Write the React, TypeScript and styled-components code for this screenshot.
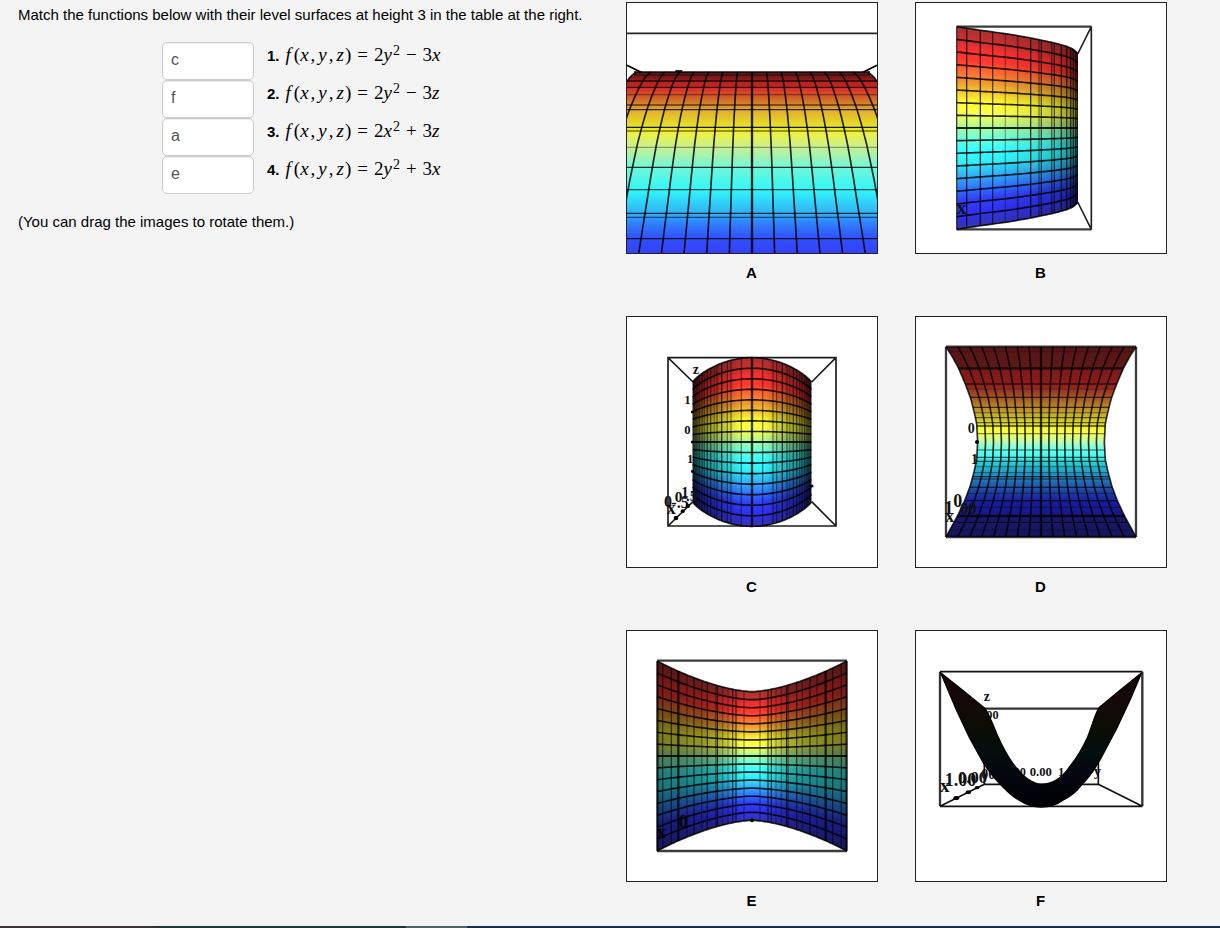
import React from "react";
import styled, { createGlobalStyle } from "styled-components";

const GlobalStyle = createGlobalStyle`
  *, *::before, *::after { box-sizing: border-box; }
  body {
    margin: 0;
    background: #f4f4f4;
    color: #000;
    font: 15px/20px "Liberation Sans", Arial, sans-serif;
  }
`;

/* ---------- layout ---------- */

const Page = styled.div`
  min-height: 100vh;
  display: flex;
  flex-direction: column;
`;

const Problem = styled.main`
  flex: 1;
  display: grid;
  grid-template-columns: minmax(0, 1fr) auto;
  column-gap: 32px;
  padding: 2px 53px 8px 18px;
`;

const Statement = styled.section`
  display: flex;
  flex-direction: column;
`;

const Paragraph = styled.p`
  margin: 3px 0 17px;
`;

const QuestionList = styled.ol`
  list-style: none;
  margin: 0 0 15px;
  padding: 0 0 0 144px;
`;

const Question = styled.li`
  display: flex;
  align-items: flex-start;
  gap: 13px;
  height: 38px;
`;

const Answer = styled.input`
  width: 92px;
  height: 38px;
  padding: 4px 8px 6px;
  border: 1px solid #ccc;
  border-radius: 5px;
  background: #fff;
  box-shadow: inset 0 1px 1px rgba(0, 0, 0, 0.08);
  color: #555;
  font: inherit;
  font-size: 16px;
`;

const QuestionLabel = styled.label`
  display: flex;
  align-items: baseline;
  gap: 6px;
  padding-top: 2px;
`;

const Formula = styled.span`
  font: 19px/22px "Liberation Serif", "Times New Roman", serif;
  white-space: nowrap;

  sup {
    font-size: 14px;
    line-height: 0;
    vertical-align: 6px;
    margin-left: 1px;
  }
`;

const Variable = styled.i<{ $after?: number }>`
  margin-right: ${(p) => p.$after ?? 0}px;
`;

const Comma = styled.span`
  margin-right: 3px;
`;

const Operator = styled.span<{ $space: number }>`
  margin: 0 ${(p) => p.$space}px;
`;

const Gallery = styled.section`
  display: grid;
  grid-template-columns: repeat(2, 252px);
  grid-auto-rows: max-content;
  gap: 33px 37px;
`;

const Plot = styled.figure`
  margin: 0;
`;

const Canvas = styled.svg`
  display: block;
  width: 252px;
  height: 252px;
  border: 1px solid #222;
  background: #fff;
  cursor: move;
`;

const Caption = styled.figcaption`
  padding-top: 9px;
  padding-right: 1px;
  text-align: center;
  font-weight: bold;
`;

const BottomEdge = styled.footer`
  display: flex;
  height: 2px;
  background: #1b2d45;
`;

const EdgePart = styled.span<{ $width: number; $color: string }>`
  width: ${(p) => p.$width}px;
  background: ${(p) => p.$color};
`;

/* ---------- plots ---------- */

type Pt = [number, number];
type Stop = [number, string];

const INK = "#000";
const SERIF = '"Liberation Serif", "Times New Roman", serif';

const rainbow: Stop[] = [
  [0, "#ac3030"], [0.06, "#c83030"], [0.1, "#f53030"], [0.16, "#ff3830"],
  [0.2, "#ff6030"], [0.27, "#ee9a30"], [0.32, "#f4cc2c"], [0.375, "#ffff30"],
  [0.43, "#faff50"], [0.49, "#b4f890"], [0.54, "#78ffd0"], [0.61, "#38ffff"],
  [0.67, "#30f0f8"], [0.74, "#30b0f8"], [0.8, "#3078ff"], [0.86, "#3040f8"],
  [0.93, "#3030f0"], [1, "#3434b0"],
];

const toPoints = (pts: Pt[]) => pts.map((p) => p.join(",")).join(" ");

const interpolate = (table: Pt[]) => (v: number) => {
  if (v <= table[0][0]) return table[0][1];
  for (let i = 1; i < table.length; i++) {
    const [x1, y1] = table[i];
    const [x0, y0] = table[i - 1];
    if (v <= x1) return y0 + ((y1 - y0) * (v - x0)) / (x1 - x0);
  }
  return table[table.length - 1][1];
};

const range = (from: number, to: number, step: number) => {
  const out: number[] = [];
  for (let v = from; v < to; v += step) out.push(v);
  out.push(to);
  return out;
};

function Gradient({ id, stops, span }: { id: string; stops: Stop[]; span?: Pt }) {
  const box = span
    ? { gradientUnits: "userSpaceOnUse" as const, x1: 0, x2: 0, y1: span[0], y2: span[1] }
    : { x1: 0, x2: 0, y1: 0, y2: 1 };
  return (
    <linearGradient id={id} {...box}>
      {stops.map(([at, color], i) => (
        <stop
          key={i}
          offset={span ? (at - span[0]) / (span[1] - span[0]) : at}
          stopColor={color}
        />
      ))}
    </linearGradient>
  );
}

/* A surface seen from the side: height varies with x, rulings are vertical. */
function SideSurface(props: {
  id: string;
  left: number;
  right: number;
  mid: number;
  half: (x: number) => number;
  shade: (x: number) => number;
  verticals: Pt[];
}) {
  const { id, left, right, mid, half, shade, verticals } = props;
  const strips = range(Math.ceil(left / 3) * 3, right - 3, 3);
  const xs = range(left, right, 6);
  return (
    <g>
      <defs>
        <Gradient id={id} stops={rainbow} />
      </defs>
      {strips.map((x) => {
        const h = half(x + 1.5);
        const area = { x, y: mid - h, width: 3, height: 2 * h, shapeRendering: "crispEdges" };
        return (
          <g key={x}>
            <rect {...area} fill={`url(#${id})`} />
            <rect {...area} fill="#000" fillOpacity={shade(x)} />
          </g>
        );
      })}
      {verticals.map(([x, weight]) => (
        <line
          key={x}
          x1={x}
          x2={x}
          y1={mid - half(x)}
          y2={mid + half(x)}
          stroke={INK}
          strokeWidth={weight > 1 ? 7 : 4}
          strokeOpacity={weight > 1 ? 0.75 : weight * 0.75}
        />
      ))}
      {range(-8, 8, 1).map((j) => (
        <polyline
          key={j}
          points={toPoints(xs.map((x) => [x, mid + (half(x) * j) / 8]))}
          fill="none"
          stroke={INK}
          strokeOpacity={0.85}
          strokeWidth={j === 0 ? 6 : 5}
        />
      ))}
    </g>
  );
}

function PlotA() {
  const spread = interpolate([
    [216, 43.3], [222, 44.4], [232, 45.8], [248, 47.2], [265, 48.5], [290, 50.2],
    [325, 52.3], [350, 53.6], [384, 55.2], [430, 57.2], [480, 59], [535, 60.9],
    [590, 62.6], [640, 64.2], [700, 66.1], [762, 68],
  ]);
  const ys = [216, 222, 232, 248, 265, 290, 325, 350, 384, 430, 480, 535, 590, 640, 700, 762];
  const edge = (k: number): Pt[] => ys.map((y) => [396 + k * spread(y), y]);
  const rows: Pt[] = [
    [216, 0.9], [225, 0.4], [243, 0.8], [262, 0.7], [284, 0.4], [315, 0.6], [329, 0.8],
    [382, 0.9], [393, 0.5], [442, 0.35], [502, 0.8], [569, 0.7], [640, 0.75],
    [652, 0.55], [716, 0.8],
  ];
  return (
    <g>
      <defs>
        <Gradient
          id="surface-a"
          span={[216, 762]}
          stops={[
            [216, "#561616"], [236, "#841a1a"], [244, "#b42222"], [262, "#c42626"],
            [268, "#d83428"], [290, "#d05c28"], [315, "#d88a2a"], [332, "#e2b02e"],
            [382, "#e6e428"], [400, "#f0f044"], [442, "#c8f090"], [500, "#74f6d8"],
            [569, "#30f8f8"], [640, "#30b0f8"], [670, "#3080ff"], [716, "#3050f8"],
            [762, "#3440fa"],
          ]}
        />
      </defs>
      <g stroke={INK} strokeWidth={5}>
        <line x1={21} y1={100} x2={771} y2={100} strokeOpacity={0.85} />
        <line x1={21} y1={196} x2={66} y2={218} />
        <line x1={771} y1={196} x2={726} y2={218} />
        <line x1={166} y1={213} x2={187} y2={213} />
      </g>
      <polygon
        fill="url(#surface-a)"
        points={toPoints([[50, 216], [36, 226], [21, 242], [21, 762], [771, 762], [771, 242], [756, 226], [742, 216]])}
      />
      {rows.map(([y, o]) => (
        <line key={y} x1={y < 240 ? 42 : 21} x2={y < 240 ? 750 : 771} y1={y} y2={y} stroke={INK} strokeWidth={4} strokeOpacity={o} />
      ))}
      {range(-8, 8, 1).map((k) => (
        <polyline
          key={k}
          points={toPoints(edge(k))}
          fill="none"
          stroke={INK}
          strokeOpacity={0.85}
          strokeWidth={k === 0 ? 7 : 5}
        />
      ))}
    </g>
  );
}

function PlotB() {
  const half = interpolate([
    [140, 304], [220, 292], [300, 281], [362, 270], [430, 256], [470, 245], [490, 236], [503, 224],
  ]);
  const shade = interpolate([[140, 0], [260, 0], [360, 0.08], [430, 0.2], [470, 0.35], [503, 0.6]]);
  return (
    <g>
      <g stroke="#3c3c3c" strokeWidth={7} fill="none">
        <path d="M140 80H545M140 688H545" />
      </g>
      <path d="M544 80V688M544 80L503 162M544 688L503 606" stroke="#222" strokeWidth={5} />
      <SideSurface
        id="surface-b"
        left={140}
        right={503}
        mid={384}
        half={half}
        shade={shade}
        verticals={[
          [140, 1], [170, 1], [211, 1], [248, 0.8], [286, 0.4], [323, 0.6], [362, 1], [387, 0.6],
          [394, 0.8], [425, 0.7], [433, 0.8], [454, 0.9], [470, 0.9], [482, 0.9], [490, 0.8], [497, 0.8], [502, 0.9],
        ]}
      />
      <text x={140} y={643} fontFamily={SERIF} fontWeight="bold" fontSize={58} fill="#111">x</text>
    </g>
  );
}

function PlotC() {
  const half = (x: number) => {
    const u = Math.min(1, Math.abs(x - 396) / 178);
    return 180 + 73 * Math.pow(1 - u * u, 0.85);
  };
  const dark = interpolate([[0, 0], [35, 0], [70, 0.15], [100, 0.26], [140, 0.42], [178, 0.68]]);
  const offsets: Pt[] = [
    [32, 0.6], [63, 0.6], [74, 0.6], [91, 0.9], [105, 0.6], [113, 0.4], [124, 0.7],
    [134, 0.7], [143, 0.5], [150, 0.6], [158, 0.6], [165, 0.6], [171, 0.6], [177, 0.9],
  ];
  const verticals: Pt[] = [
    [396, 2],
    ...offsets.flatMap(([d, w]): Pt[] => [[396 - d, w], [396 + d, w]]),
  ];
  return (
    <g>
      <path
        d="M144 143H648V648H144ZM144 143L219 216M648 143L575 216M144 648L219 575M648 648L575 575"
        fill="none"
        stroke="#1c1c1c"
        strokeWidth={5}
      />
      <SideSurface
        id="surface-c"
        left={218}
        right={574}
        mid={396}
        half={half}
        shade={(x) => dark(Math.abs(x - 396))}
        verticals={verticals}
      />
      <g fontFamily={SERIF} fontWeight="bold" fill="#111">
        <text x={218} y={192} fontSize={42}>z</text>
        <text x={193} y={283} fontSize={38}>1</text>
        <text x={193} y={371} fontSize={38}>0</text>
        <text x={201} y={460} fontSize={38}>1</text>
        <text x={140} y={612} fontSize={54}>x</text>
        <text x={132} y={590} fontSize={48}>0</text>
        <text x={154} y={594} fontSize={48}>-.5</text>
        <text x={164} y={575} fontSize={46}>0</text>
        <text x={184} y={562} fontSize={44}>1</text>
        <text x={198} y={574} fontSize={44}>.5</text>
      </g>
      <circle cx={168} cy={624} r={7} />
      <circle cx={188} cy={604} r={6} />
      <circle cx={204} cy={588} r={6} />
      <path d="M213 306h8M213 396h8M213 484h8M572 528h8" stroke={INK} strokeWidth={7} />
    </g>
  );
}

function PlotD() {
  const half = interpolate([
    [110, 285], [140, 266], [175, 247], [222, 227], [265, 211], [300, 202], [340, 193],
    [396, 190], [450, 193], [490, 202], [530, 213], [570, 228], [617, 250], [650, 268], [681, 285],
  ]);
  const ys = range(110, 681, 8);
  const line = (k: number): Pt[] => ys.map((y) => [393 + (half(y) * k) / 8, y]);
  const rows: Pt[] = [
    [110, 2], [125, 0.3], [175, 2], [222, 0.9], [237, 0.3], [262, 1], [292, 1], [308, 0.5],
    [323, 0.8], [338, 0.8], [348, 1], [371, 0.7], [420, 0.6], [442, 0.9], [454, 0.9],
    [470, 0.5], [488, 0.5], [500, 1], [507, 0.6], [532, 1], [550, 0.5], [572, 1], [592, 0.5],
    [618, 2], [637, 0.9], [660, 0.3], [681, 2],
  ];
  return (
    <g>
      <defs>
        <Gradient
          id="surface-d"
          span={[110, 681]}
          stops={[
            [110, "#561616"], [172, "#5e1818"], [180, "#7c1a1a"], [222, "#8c1c1a"],
            [240, "#983420"], [265, "#a45a22"], [292, "#b88828"], [323, "#c8bc28"],
            [344, "#dede2c"], [352, "#f4f436"], [371, "#faff50"], [396, "#b8ffb8"],
            [420, "#68ffe8"], [442, "#40f4f0"], [454, "#28d4d4"], [490, "#2298c4"],
            [520, "#2064b0"], [550, "#1c3ca0"], [575, "#181c9c"], [612, "#181888"],
            [622, "#18186a"], [681, "#16165a"],
          ]}
        />
      </defs>
      <path d="M108 110V681M678 110V681" stroke="#3c3c3c" strokeWidth={7} />
      <polygon fill="url(#surface-d)" points={toPoints([...line(-8), ...line(8).reverse()])} />
      {rows.map(([y, w]) => (
        <line
          key={y}
          x1={393 - half(y)}
          x2={393 + half(y)}
          y1={y}
          y2={y}
          stroke={INK}
          strokeWidth={w > 1 ? 7 : 4}
          strokeOpacity={w > 1 ? 0.75 : w * 0.7}
        />
      ))}
      {range(-8, 8, 1).map((k) => (
        <polyline key={k} points={toPoints(line(k))} fill="none" stroke={INK} strokeOpacity={0.8} strokeWidth={k === 0 ? 7 : 5} />
      ))}
      <g fontFamily={SERIF} fontWeight="bold" fill="#111">
        <text x={173} y={368} fontSize={42}>0</text>
        <text x={183} y={463} fontSize={42}>1</text>
        <text x={102} y={612} fontSize={56}>1</text>
        <text x={106} y={636} fontSize={54}>x</text>
        <text x={130} y={592} fontSize={54}>0</text>
        <text x={150} y={611} fontSize={50}>00</text>
      </g>
      <circle cx={201} cy={396} r={6} />
    </g>
  );
}

function PlotE() {
  const half = (x: number) => 193 + 92 * Math.pow(Math.min(1, Math.abs(x - 396) / 285), 1.6);
  const dark = interpolate([[0, 0], [30, 0], [60, 0.13], [100, 0.3], [160, 0.42], [285, 0.52]]);
  const offsets: Pt[] = [
    [24, 0.5], [48, 0.8], [58, 0.8], [72, 0.4], [88, 0.4], [104, 1], [109, 0.5], [134, 0.8],
    [151, 0.5], [174, 0.8], [195, 0.5], [221, 2], [242, 0.8], [268, 0.7], [284, 2],
  ];
  return (
    <g>
      <path d="M111 107H681M111 678H681" stroke="#3c3c3c" strokeWidth={7} />
      <SideSurface
        id="surface-e"
        left={111}
        right={681}
        mid={393}
        half={half}
        shade={(x) => dark(Math.abs(x - 396))}
        verticals={offsets.flatMap(([d, w]): Pt[] => [[396 - d, w], [396 + d, w]])}
      />
      <g fontFamily={SERIF} fontWeight="bold" fill="#050505">
        <text x={110} y={638} fontSize={56}>x</text>
        <text x={176} y={609} fontSize={56}>0</text>
      </g>
      <circle cx={396} cy={586} r={6} />
    </g>
  );
}

function PlotF() {
  return (
    <g>
      <defs>
        <Gradient
          id="surface-f"
          span={[145, 545]}
          stops={[
            [145, "#140404"], [230, "#140808"], [300, "#0c0c04"], [390, "#020e0e"],
            [450, "#04040e"], [545, "#000004"],
          ]}
        />
      </defs>
      <g fill="none" stroke="#333">
        <path d="M90 140V544M697 140V544M223 251H565" strokeWidth={7} />
        <path d="M90 140H697M90 544H697M223 250V478H565V250M90 544L223 478M565 478L697 544" strokeWidth={5} stroke="#111" />
      </g>
      <g fontFamily={SERIF} fontWeight="bold" fill="#111">
        <text x={221} y={227} fontSize={42}>z</text>
        <text x={229} y={281} fontSize={37}>00</text>
        <text x={242} y={337} fontSize={38}>1</text>
        <text x={90} y={501} fontSize={58}>x</text>
        <text x={104} y={482} fontSize={54}>1.00</text>
        <text x={144} y={473} fontSize={50}>0.00</text>
        <text x={214} y={461} fontSize={42}>00</text>
        <text x={311} y={453} fontSize={37}>00</text>
        <text x={359} y={453} fontSize={38}>0.00</text>
        <text x={444} y={453} fontSize={38}>1.00</text>
        <text x={552} y={453} fontSize={42}>y</text>
      </g>
      <path
        d="M92 143L138 252L178 337L222 417C245 452 258 466 278 485C298 505 315 520 330 527C350 540 365 545 393 546C421 545 440 540 456 527C485 512 500 500 514 480C535 460 550 440 570 405L620 310L660 225L695 143L630 196L567 248C552 275 548 300 532 338C517 370 500 400 478 426C455 460 430 476 396 478C365 477 340 455 316 425C294 398 276 362 260 326C248 296 238 270 225 250L158 196Z"
        fill="url(#surface-f)"
        stroke="#060202"
        strokeWidth={4}
      />
      <ellipse cx={139} cy={519} rx={9} ry={6} />
      <ellipse cx={175} cy={502} rx={8} ry={6} />
      <ellipse cx={201} cy={488} rx={7} ry={5} />
    </g>
  );
}

const plots = [
  { name: "A", viewBox: "21 9 750 750", Surface: PlotA },
  { name: "B", viewBox: "18 9 750 750", Surface: PlotB },
  { name: "C", viewBox: "21 21 750 750", Surface: PlotC },
  { name: "D", viewBox: "18 21 750 750", Surface: PlotD },
  { name: "E", viewBox: "21 18 750 750", Surface: PlotE },
  { name: "F", viewBox: "18 18 750 750", Surface: PlotF },
];

const questions = [
  { answer: "c", squared: "y", sign: "−", linear: "x" },
  { answer: "f", squared: "y", sign: "−", linear: "z" },
  { answer: "a", squared: "x", sign: "+", linear: "z" },
  { answer: "e", squared: "y", sign: "+", linear: "x" },
];

export default function App() {
  return (
    <Page>
      <GlobalStyle />
      <Problem>
        <Statement>
          <Paragraph>
            Match the functions below with their level surfaces at height 3 in the table at the right.
          </Paragraph>
          <QuestionList>
            {questions.map((q, i) => (
              <Question key={i}>
                <Answer id={`answer-${i + 1}`} type="text" defaultValue={q.answer} />
                <QuestionLabel htmlFor={`answer-${i + 1}`}>
                  <b>{i + 1}.</b>
                  <Formula>
                    <Variable $after={3}>f</Variable>(<Variable $after={2}>x</Variable>
                    <Comma>,</Comma>
                    <Variable $after={2}>y</Variable>
                    <Comma>,</Comma>
                    <Variable $after={1}>z</Variable>)
                    <Operator $space={6}>=</Operator>2<Variable>{q.squared}</Variable>
                    <sup>2</sup>
                    <Operator $space={6}>{q.sign}</Operator>3<Variable>{q.linear}</Variable>
                  </Formula>
                </QuestionLabel>
              </Question>
            ))}
          </QuestionList>
          <Paragraph>(You can drag the images to rotate them.)</Paragraph>
        </Statement>
        <Gallery>
          {plots.map(({ name, viewBox, Surface }) => (
            <Plot key={name}>
              <Canvas viewBox={viewBox} role="img" aria-label={`Level surface ${name}`}>
                <Surface />
              </Canvas>
              <Caption>{name}</Caption>
            </Plot>
          ))}
        </Gallery>
      </Problem>
      <BottomEdge>
        <EdgePart $width={158} $color="#3a3232" />
        <EdgePart $width={248} $color="#20363f" />
        <EdgePart $width={61} $color="#52646a" />
      </BottomEdge>
    </Page>
  );
}
